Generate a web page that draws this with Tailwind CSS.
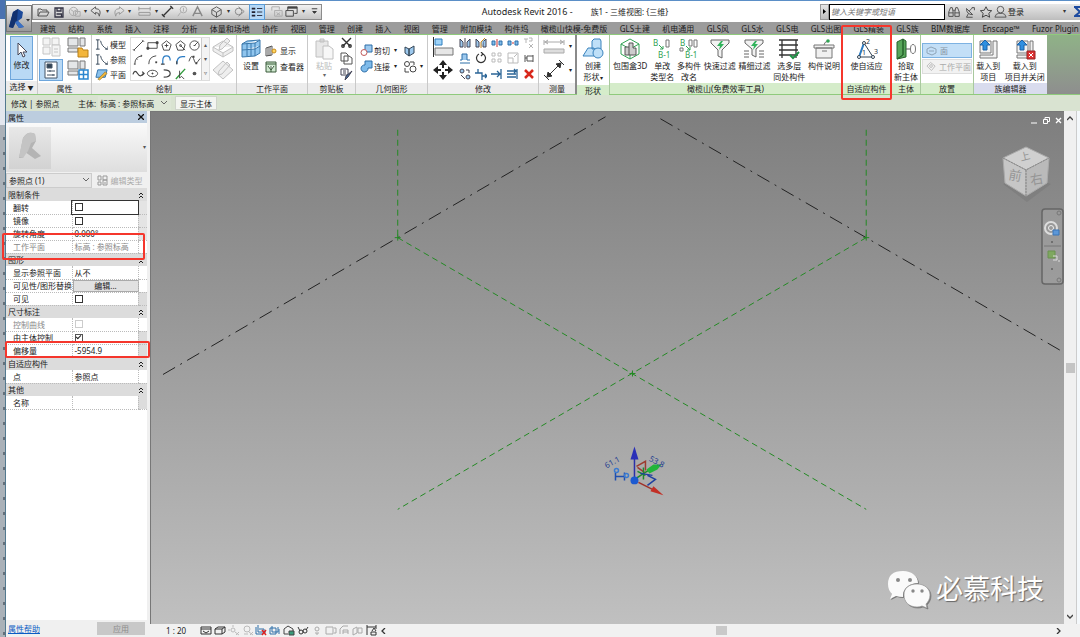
<!DOCTYPE html>
<html lang="zh-CN">
<head>
<meta charset="utf-8">
<title>Autodesk Revit 2016</title>
<script src="https://cdn.jsdelivr.net/npm/@tailwindcss/browser@4"></script>
</head>
<body class="relative flex h-screen overflow-hidden bg-white font-['Noto_Sans','Noto_Sans_CJK_SC',sans-serif] text-[8px] leading-[11px] text-[#222]">

<!-- edge of the window behind -->
<div class="flex w-[6px] shrink-0 flex-col border-r border-[#53798f]" aria-hidden="true">
  <div class="h-[19px] bg-[#4a72b0]"></div>
  <div class="h-[106px] bg-[#e3e7ee]"></div>
  <div class="flex-1 bg-[#aab1b8] bg-[repeating-linear-gradient(to_bottom,transparent_0_12px,#66707a_12px_15px)] bg-[length:2px_100%] bg-right bg-no-repeat"></div>
</div>

<div class="flex min-w-0 flex-1 flex-col border-t border-[#5b8fc7]">

<!-- title bar and tabs -->
<header class="flex h-[33px] shrink-0">
  <div class="flex w-[26px] shrink-0 flex-col bg-white pt-1">
    <button aria-label="应用程序菜单" class="flex h-[27px] items-center justify-center border border-[#777] bg-linear-to-b from-[#eee] to-[#999]">
      <svg class="h-[24px] w-[24px]" viewBox="0 0 24 24"><path d="M2 20 L6 5 L11 2 L16 5 L15 11 L11 14 L17 20 L12 21 L8 15 L6 21 Z" fill="#1c4a9a"/><path d="M6 5 L11 2 L10 13 L6 21 L2 20Z" fill="#12316e"/><path d="M8 15 L11 14 L17 20 L12 21Z" fill="#3a70c4"/><path d="M19 12h4l-2 2.500z" fill="#333"/></svg>
    </button>
    <div class="flex-1 bg-[#9c9c9c]"></div>
  </div>
  <div class="flex min-w-0 flex-1 flex-col">
    <div class="flex h-[21px] shrink-0 items-center">
      <div class="flex h-[16px] w-[290px] shrink-0 items-center border border-[#8c8c8c] bg-linear-to-b from-[#f2f2f2] to-[#c4c4c4] pl-0.5">
        <button aria-label="打开"><svg class="size-[16px]" viewBox="0 0 16 16" fill="none" stroke="#555"><path d="M3 12V5h3l1 1h5v2M3 12l2-4h9l-2 4z"/></svg></button>
        <button aria-label="保存"><svg class="size-[16px]" viewBox="0 0 16 16" fill="none" stroke="#334"><path d="M4 4h8v9H4zM6 4v3h4V4M5.500 10h5v3" stroke-width="1.300"/></svg></button>
        <button aria-label="同步"><svg class="size-[15px]" viewBox="0 0 16 16" fill="none" stroke="#aaa"><circle cx="7" cy="8" r="4.500"/><path d="M9 8h5v5H9zM4 6l3 2v4M7 8l4-2"/></svg></button>
        <span class="w-[7px] text-center text-[6px] text-[#333]">▾</span>
        <button aria-label="放弃"><svg class="size-[15px]" viewBox="0 0 16 16" fill="none" stroke="#555"><path d="M7 3 2 7l5 4V9q4 0 4 4 3-8-4-8z"/></svg></button>
        <span class="w-[7px] text-center text-[6px] text-[#333]">▾</span>
        <button aria-label="重做"><svg class="size-[15px]" viewBox="0 0 16 16" fill="none" stroke="#999"><path d="M9 3l5 4-5 4V9q-4 0-4 4-3-8 4-8z"/></svg></button>
        <span class="w-[7px] text-center text-[6px] text-[#333]">▾</span>
        <button aria-label="测量" class="ml-1"><svg class="size-[15px]" viewBox="0 0 16 16" fill="none" stroke="#999"><path d="M2 5h12M2 3v4M14 3v4M2 9h12v3H2z"/></svg></button>
        <span class="w-2 text-center text-[6px] text-[#333]">▾</span>
        <button aria-label="对齐尺寸标注"><svg class="size-[15px]" viewBox="0 0 16 16" fill="none" stroke="#333"><path d="M3 13 13 3M2 11l3 3M11 2l3 3" stroke-width="1.400"/></svg></button>
        <button aria-label="标记"><svg class="size-[15px]" viewBox="0 0 16 16" fill="none" stroke="#aaa"><circle cx="9" cy="6" r="3.500"/><path d="M6 9l-3 4M9 4v4"/></svg></button>
        <button aria-label="文字"><svg class="size-[15px]" viewBox="0 0 16 16" fill="none" stroke="#888" stroke-width="1.500"><path d="M3 13 8 3l5 10M5 10h6"/></svg></button>
        <button aria-label="默认三维视图" class="ml-1"><svg class="size-[15px]" viewBox="0 0 16 16" fill="none" stroke="#555"><path d="M3 6l5-3 5 3v5l-5 3-5-3zM3 6l5 3 5-3M8 9v5"/></svg></button>
        <span class="w-2 text-center text-[6px] text-[#333]">▾</span>
        <button aria-label="剖面"><svg class="size-[15px]" viewBox="0 0 16 16" fill="none" stroke="#888"><circle cx="7" cy="8" r="3.500"/><path d="M7 3l6 5-6 5"/></svg></button>
        <button aria-label="细线" class="ml-0.5 border border-[#5a9bd5] bg-[#b5d8f7]"><svg class="size-[14px]" viewBox="0 0 16 16" fill="none" stroke="#223"><path d="M2 4h4M2 8h4M2 12h4" stroke-width="2"/><path d="M8 4h6M8 8h6M8 12h6"/></svg></button>
        <button aria-label="关闭隐藏窗口" class="ml-1"><svg class="size-[15px]" viewBox="0 0 16 16" fill="none" stroke="#aaa"><path d="M3 7V3h8v3M6 7h8v6H6zM8 9l4 3M12 9l-4 3"/></svg></button>
        <button aria-label="切换窗口"><svg class="size-[15px]" viewBox="0 0 16 16" fill="none" stroke="#444"><path d="M4 3h10v7h-3M4 3v4M2 7h8v6H2z"/><path d="M4 4h10" stroke-width="2"/></svg></button>
        <span class="w-2 text-center text-[6px] text-[#333]">▾</span>
        <button aria-label="自定义" class="ml-0.5"><svg class="size-[11px]" viewBox="0 0 12 12" stroke="#333" fill="#333"><path d="M3 3h6M4 6h4l-2 2z"/></svg></button>
      </div>
      <h1 class="flex flex-1 justify-center gap-[18px] pl-2 text-[8px] leading-[16px] whitespace-nowrap"><span class="text-[9px]">Autodesk Revit 2016 -</span><span>族1 - 三维视图: {三维}</span></h1>
      <div class="flex h-[16px] w-[260px] shrink-0 items-center bg-linear-to-b from-[#e8e8e8] to-[#bdbdbd]">
        <button aria-label="展开搜索" class="flex h-full w-[9px] items-center justify-center border border-[#999]"><svg class="size-[5px]" viewBox="0 0 5 5"><path d="M1 0l3 2.500L1 5z"/></svg></button>
        <input aria-label="搜索" placeholder="键入关键字或短语" class="h-full w-[116px] border border-black bg-white px-px text-[8px] italic placeholder:text-[#777]">
        <button aria-label="搜索帮助" class="ml-0.5"><svg class="size-[14px]" viewBox="0 0 16 16" fill="none" stroke="#444"><path d="M4 3h2l1 5v5H2V8zM10 3h2l2 5v5H9V8zM7 6h2M2 9h5M9 9h5"/></svg></button>
        <button aria-label="通讯中心"><svg class="ml-0.5 size-[14px]" viewBox="0 0 16 16" fill="none" stroke="#444"><path d="M4 4q0 7 7 7zM7 7l4-4M10 3h3v3M6 10l-2 4h7"/></svg></button>
        <button aria-label="收藏夹"><svg class="ml-0.5 size-[14px]" viewBox="0 0 16 16" fill="none" stroke="#333"><path d="M8 2l2 4 4.500.500-3.300 3 1 4.500L8 11.700 3.800 14l1-4.500-3.300-3L6 6z"/></svg></button>
        <button class="flex items-center"><svg class="size-[15px]" viewBox="0 0 16 16" fill="none" stroke="#555"><circle cx="8" cy="6" r="3.500"/><path d="M2 14q1-4 4-4h4q3 0 4 4z"/></svg>登录</button>
        <span class="ml-auto pr-2 text-[6px] text-[#333]">▾</span>
        <svg class="h-[11px] w-[6px]" viewBox="0 0 6 11" stroke="#1d4ba0" stroke-width="2" fill="none"><path d="M0 1h6M1 1l5 5-5 4h5"/></svg>
      </div>
    </div>
    <nav class="flex h-[12px] shrink-0 items-center justify-between bg-[#9c9c9c] pr-px pl-2 whitespace-nowrap text-[#1c1c1c]">
      <a href="#">建筑</a><a href="#">结构</a><a href="#">系统</a><a href="#">插入</a><a href="#">注释</a><a href="#">分析</a><a href="#">体量和场地</a><a href="#">协作</a><a href="#">视图</a><a href="#">管理</a><a href="#">创建</a><a href="#">插入</a><a href="#">视图</a><a href="#">管理</a><a href="#">附加模块</a><a href="#">构件坞</a><a href="#">橄榄山快模-免费版</a><a href="#">GLS土建</a><a href="#">机电通用</a><a href="#">GLS风</a><a href="#">GLS水</a><a href="#">GLS电</a><a href="#">GLS出图</a><a href="#">GLS精装</a><a href="#">GLS族</a><a href="#">BIM数据库</a><a href="#">Enscape™</a><a href="#">Fuzor Plugin</a>
    </nav>
  </div>
</header>

<!-- ribbon -->
<div class="flex h-[61px] shrink-0 border-y border-[#8fca7c] bg-linear-to-b from-[#8fb287] to-[#8e8e8e] whitespace-nowrap">
  <section class="flex w-[32px] shrink-0 flex-col border-r border-[#c9c9c9] bg-white">
    <div class="flex flex-1 justify-center px-1 pt-px">
      <button class="flex w-full flex-col items-center border border-[#6ea6dc] bg-[#b9d9f5] pt-1"><svg class="size-[18px]" viewBox="0 0 18 18"><path d="M5 2v12l3-3 2 5 2-1-2-4h4z" fill="#fff" stroke="#445"/></svg>修改</button>
    </div>
    <h2 class="mt-px bg-[#ececec] text-center">选择 <span class="text-[6px]">▼</span></h2>
  </section>
  <section class="flex w-[54px] shrink-0 flex-col border-r border-[#c9c9c9] bg-white">
    <div class="grid flex-1 grid-cols-2 place-items-center">
      <button aria-label="类型属性"><svg class="size-[22px]" viewBox="0 0 22 22" fill="#f4f4f4" stroke="#c4c4c4"><path d="M3 2h7v7H3zM12 2h7v7h-7zM3 11h7v7H3z"/><path d="M12 9h8v11h-8zM14 13h4M14 16h4"/></svg></button>
      <button aria-label="族类别"><svg class="size-[22px]" viewBox="0 0 22 22" fill="#e4e6e8" stroke="#777"><path d="M1 2h10v8H1zM13 2h5v8h-5zM1 12h10v4H1z"/><path d="M11 12h4l1 2h5v7H11z" fill="#f3b63c" stroke="#b98018"/></svg></button>
      <button aria-label="属性" class="flex h-[22px] w-[24px] items-center justify-center border border-[#6ea6dc] bg-[#b9d9f5]"><svg class="size-[20px]" viewBox="0 0 20 20" fill="#fff" stroke="#456"><path d="M4 2h12v16H4z"/><path d="M6 4h5v4H6z" fill="#345"/><path d="M6 11h8M6 15h8M9 10v2M12 14v2"/></svg></button>
      <button aria-label="族类型"><svg class="size-[22px]" viewBox="0 0 22 22" fill="#e4e6e8" stroke="#777"><path d="M1 2h10v8H1zM13 2h5v8h-5zM1 12h10v4H1z"/><path d="M12 11h9v9h-9zM12 15.500h9M16.500 11v9" fill="#fff" stroke="#2a86cf" stroke-width="1.500"/></svg></button>
    </div>
    <h2 class="mt-px bg-[#ececec] text-center">属性</h2>
  </section>
  <section class="flex w-[145px] shrink-0 flex-col border-r border-[#c9c9c9] bg-white">
    <div class="flex flex-1 pt-[2px] pl-[3px]">
      <div class="flex w-[35px] shrink-0 flex-col justify-around">
        <button class="flex items-center gap-[2px]"><svg class="size-[13px]" viewBox="0 0 14 14" fill="none" stroke="#345"><path d="M3 2v10M1 2h4M1 12h4M6 3q1 6 7 9M11 12h3v-3"/></svg>模型</button>
        <button class="flex items-center gap-[2px]"><svg class="size-[13px]" viewBox="0 0 14 14" fill="none" stroke="#345"><path d="M3 2v10M1 2h4M1 12h4M6 3q1 6 7 9M11 12h3v-3"/></svg>参照</button>
        <button class="flex items-center gap-[2px]"><svg class="size-[13px]" viewBox="0 0 14 14"><path d="M3 2h10l-2 8H1z" fill="#8bc2ec" stroke="#2d6ea8"/><path d="M3 12 11 4l2 2-8 7z" fill="#f0b53a" stroke="#8b6a20" stroke-width=".6"/></svg>平面</button>
      </div>
      <div class="flex h-[44px] w-[80px] shrink-0 border border-[#ddd]">
        <div class="grid flex-1 grid-cols-5 place-items-center">
          <button aria-label="直线"><svg class="size-[13px]" viewBox="0 0 14 14" fill="none" stroke="#444"><path d="M2 12 12 2M1 11l2 2M11 1l2 2"/></svg></button>
          <button aria-label="矩形"><svg class="size-[13px]" viewBox="0 0 14 14" fill="none" stroke="#444"><path d="M2 4h10v6H2z"/><path d="M1 9h2v2H1zM11 3h2v2h-2z" fill="#444"/></svg></button>
          <button aria-label="内接多边形"><svg class="size-[13px]" viewBox="0 0 14 14" fill="none" stroke="#444"><path d="M7 2l5 4-2 6H4L2 6z"/><path d="M7 5v4M5 7h4"/></svg></button>
          <button aria-label="外接多边形"><svg class="size-[13px]" viewBox="0 0 14 14" fill="none" stroke="#444"><path d="M7 2l5 4-2 6H4L2 6zM7 7l5 5"/><circle cx="7" cy="7" r="1"/></svg></button>
          <button aria-label="圆形"><svg class="size-[13px]" viewBox="0 0 14 14" fill="none" stroke="#444"><circle cx="7" cy="7" r="5"/><path d="M7 7l4-4M6 7h2"/></svg></button>
          <button aria-label="起点终点半径弧"><svg class="size-[13px]" viewBox="0 0 14 14" fill="none" stroke="#444"><path d="M3 12Q3 4 11 3M2 12h2M10 2v2M5 6l1 1"/></svg></button>
          <button aria-label="圆心端点弧"><svg class="size-[13px]" viewBox="0 0 14 14" fill="none" stroke="#444"><path d="M3 12Q3 4 11 3"/><path d="M10 9h2v2h-2z" fill="#444" stroke="none"/></svg></button>
          <button aria-label="相切弧"><svg class="size-[13px]" viewBox="0 0 14 14" fill="none" stroke="#2b7cc4" stroke-width="1.300"><path d="M3 12V8q0-5 4-5t4 5"/><path d="M1 12h4" stroke="#444"/></svg></button>
          <button aria-label="圆角弧"><svg class="size-[13px]" viewBox="0 0 14 14" fill="none" stroke="#2b7cc4" stroke-width="1.300"><path d="M3 12Q3 4 9 4h3"/><path d="M3 12V9" stroke="#444"/></svg></button>
          <button aria-label="样条曲线"><svg class="size-[13px]" viewBox="0 0 14 14" fill="none" stroke="#444"><path d="M1 9q3-9 5-3t3 5 4-5"/><path d="M5 3h2v2H5zM8 10h2v2H8z" fill="#444" stroke="none"/></svg></button>
          <button aria-label="通过点的样条曲线"><svg class="size-[13px]" viewBox="0 0 14 14" fill="none" stroke="#444" stroke-width="1.300"><path d="M1 8q2-6 5-1t6 0M11 5l2 2-2 2"/></svg></button>
          <button aria-label="椭圆"><svg class="size-[13px]" viewBox="0 0 14 14" fill="none" stroke="#444"><ellipse cx="7" cy="7" rx="5.500" ry="3.500"/><path d="M7 6v2M6 7h2"/></svg></button>
          <button aria-label="半椭圆"><svg class="size-[13px]" viewBox="0 0 14 14" fill="none" stroke="#444" stroke-width="1.300"><path d="M4 3q7 0 7 4t-7 4"/></svg></button>
          <button aria-label="拾取线"><svg class="size-[13px]" viewBox="0 0 14 14" fill="none" stroke="#2f9a3a" stroke-width="1.500"><path d="M2 13 12 2"/><path d="M6 4v8l2-2 3 3" stroke="#444" stroke-width="1"/></svg></button>
          <button aria-label="点图元"><svg class="size-[13px]" viewBox="0 0 14 14"><circle cx="7" cy="7" r="2" fill="#555"/></svg></button>
        </div>
        <div class="flex w-[8px] flex-col items-center justify-around border-l border-[#ccc] bg-[#f3f3f3] text-[6px] text-[#555]"><span>▴</span><span>▾</span><span>▿</span></div>
      </div>
      <div class="flex flex-1 flex-col items-center">
        <button aria-label="在面上绘制"><svg class="size-[22px]" viewBox="0 0 22 22" fill="#eee" stroke="#c2c2c2"><path d="M1 10l10-6 10 6v4l-10 6-10-6zM1 10l10 6 10-6M11 16v4M8 8 15 1l3 3-8 8-3 1z"/></svg></button>
        <button aria-label="在工作平面上绘制"><svg class="size-[22px]" viewBox="0 0 22 22" fill="#eee" stroke="#c2c2c2"><path d="M1 11 11 2l10 9-10 9zM7 12l8-9 3 3-8 9-4 1z"/></svg></button>
      </div>
    </div>
    <h2 class="mt-px bg-[#ececec] text-center">绘制</h2>
  </section>
  <section class="flex w-[71px] shrink-0 flex-col border-r border-[#c9c9c9] bg-white">
    <div class="flex flex-1">
      <button class="flex w-[28px] flex-col items-center pt-[3px]"><svg class="size-[22px]" viewBox="0 0 22 22" fill="#8fc5ee" stroke="#3a78ab"><path d="M2 6l5-3 13-1v13l-5 3-13 1zM2 6l13-1 5-3M2 12l13-1 5-3M7 5v13M11 5v13M15 5v13"/></svg>设置</button>
      <div class="flex flex-col justify-center gap-[4px]">
        <button class="flex items-center gap-[3px]"><svg class="size-[12px]" viewBox="0 0 12 12" fill="#fff" stroke="#555"><path d="M1 3l6-2v9l-6 1zM3 2v9M5 2v9"/><circle cx="9" cy="6" r="2" fill="#ffd75e" stroke="#c98a1b"/></svg>显示</button>
        <button class="flex items-center gap-[3px]"><svg class="size-[12px]" viewBox="0 0 12 12" fill="#cfe8cf" stroke="#3a5a3a"><path d="M1 1h10v10H1zM1 3h10M3 5l3 4 3-4M6 5v6"/></svg>查看器</button>
      </div>
    </div>
    <h2 class="mt-px bg-[#ececec] text-center">工作平面</h2>
  </section>
  <section class="flex w-[48px] shrink-0 flex-col border-r border-[#c9c9c9] bg-white">
    <div class="flex flex-1">
      <button disabled class="flex w-[32px] flex-col items-center pt-[3px] text-[#bbb]"><svg class="size-[22px]" viewBox="0 0 22 22" fill="#e8e8e8" stroke="#c0c0c0"><path d="M3 3h12v16H3zM7 1h4v3H7z"/><path d="M10 8h6l4 3v10H10z" fill="#f7f7f7"/></svg>粘贴<span class="text-[6px] leading-[8px] text-[#666]">▾</span></button>
      <div class="flex flex-col justify-around">
        <button aria-label="剪切"><svg class="size-[13px]" viewBox="0 0 13 13" stroke="#333" fill="none" stroke-width="1.400"><path d="M2 2l8 8M11 2l-8 8"/><circle cx="3" cy="10" r="1.200"/><circle cx="10" cy="10" r="1.200"/></svg></button>
        <button aria-label="复制"><svg class="size-[13px]" viewBox="0 0 13 13" stroke="#555" fill="#fff"><path d="M1 1h5l2 2v6H1zM4 4h5l3 2v6H4z"/></svg></button>
        <button aria-label="匹配类型"><svg class="size-[13px]" viewBox="0 0 13 13" stroke="#445" fill="#fff"><path d="M1 1h7v6H1zM3 3h3M3 5h3"/><path d="M12 3 8 9l-3 3 1-4z" fill="#456a9a"/></svg></button>
      </div>
    </div>
    <h2 class="mt-px bg-[#ececec] text-center">剪贴板</h2>
  </section>
  <section class="flex w-[72px] shrink-0 flex-col border-r border-[#c9c9c9] bg-white">
    <div class="flex flex-1 justify-between pr-px pl-1">
      <div class="flex flex-col justify-center gap-[3px]">
        <button class="flex items-center gap-px"><svg class="size-[13px]" viewBox="0 0 13 13"><path d="M5 1h7v7H5z" fill="#9dc9ee" stroke="#2d6ea8"/><circle cx="4" cy="8.500" r="3" fill="#fff" stroke="#c05a5a"/></svg>剪切<span class="w-[6px] text-right text-[6px]">▾</span></button>
        <button class="flex items-center gap-px"><svg class="size-[13px]" viewBox="0 0 13 13"><path d="M5 1h7v7H8a3.500 3.500 0 1 1-3-3z" fill="#7fbbea" stroke="#2d6ea8"/></svg>连接<span class="w-[6px] text-right text-[6px]">▾</span></button>
      </div>
      <div class="flex w-[23px] flex-col justify-center gap-[3px]">
        <button aria-label="拆分面"><svg class="size-[13px]" viewBox="0 0 13 13" fill="#9dc9ee" stroke="#345"><path d="M2 3l4 2v7l-4-3zM6 5l5-3v7l-5 3z"/></svg></button>
        <button aria-label="填色" class="flex items-center"><svg class="size-[14px]" viewBox="0 0 14 14" fill="none" stroke="#444"><circle cx="4" cy="4" r="2.500"/><circle cx="10" cy="9" r="3"/><path d="M2 8v4h4M7 2h4v3"/></svg><span class="w-[6px] text-right text-[6px]">▾</span></button>
      </div>
    </div>
    <h2 class="mt-px bg-[#ececec] text-center">几何图形</h2>
  </section>
  <section class="flex w-[111px] shrink-0 flex-col border-r border-[#c9c9c9] bg-white">
    <div class="flex flex-1 gap-[3px] pr-px pl-[4px]">
      <div class="flex flex-col justify-around">
        <button aria-label="对齐"><svg class="size-[22px]" viewBox="0 0 22 22"><path d="M1.500 1v20" stroke="#333"/><path d="M3 3h7v6H3z" fill="#9fd3f8" stroke="#2d7fc0"/><path d="M3 12h18v7H3z" fill="#e6e6e6" stroke="#777"/></svg></button>
        <button aria-label="移动"><svg class="size-[22px]" viewBox="0 0 22 22" fill="#222"><path d="M11 1l4 5h-3v3h-2V6H7zM11 21l-4-5h3v-3h2v3h3zM1 11l5-4v3h3v2H6v3zM21 11l-5 4v-3h-3v-2h3V7z"/></svg></button>
      </div>
      <div class="grid flex-1 grid-cols-5 place-items-center">
        <button aria-label="镜像-拾取轴"><svg class="size-[12px]" viewBox="0 0 12 12" fill="#9dc9ee" stroke="#445"><path d="M1 2l3 3v5H1zM11 2 8 5v5h3zM6 1v10"/></svg></button>
        <button aria-label="镜像-绘制轴"><svg class="size-[12px]" viewBox="0 0 12 12" fill="#9dc9ee" stroke="#445"><path d="M1 2l3 3v5H1zM11 2 8 5v5h3z"/><path d="M6 11V5l4-4" stroke="#d08a1c"/></svg></button>
        <button aria-label="拆分图元"><svg class="size-[12px]" viewBox="0 0 12 12" fill="#7fbbea" stroke="#2d6ea8"><path d="M1 4h3v4H1zM8 4h3v4H8z"/><path d="M6 2v8" stroke="#c33"/></svg></button>
        <button aria-label="用间隙拆分"><svg class="size-[12px]" viewBox="0 0 12 12" fill="#7fbbea" stroke="#2d6ea8"><path d="M1 4h3v4H1zM8 4h3v4H8z"/><path d="M5 6h2" stroke="#c33"/></svg></button>
        <button aria-label="解锁"><svg class="size-[12px]" viewBox="0 0 12 12" fill="none" stroke="#b5b5b5"><path d="M1 2h4M3 2v4M6 1h3v3H6M6 7l4 4M10 7l-4 4"/></svg></button>
        <button aria-label="偏移"><svg class="size-[12px]" viewBox="0 0 12 12" fill="#9dc9ee" stroke="#2d6ea8"><path d="M1 8h2V2h5v6h3M1 11h10"/></svg></button>
        <button aria-label="旋转"><svg class="size-[12px]" viewBox="0 0 12 12" fill="none" stroke="#333" stroke-width="1.200"><path d="M8 2a4.500 4.500 0 1 1-4 0M6 0l2 2-2 2"/></svg></button>
        <button aria-label="阵列"><svg class="size-[12px]" viewBox="0 0 12 12" fill="none" stroke="#bbb"><path d="M1 1h3v3H1zM7 1h3v3H7zM1 7h3v3H1zM7 7h3v3H7z"/></svg></button>
        <button aria-label="缩放"><svg class="size-[12px]" viewBox="0 0 12 12" fill="none" stroke="#bbb"><path d="M1 1h10v10H1zM1 6h5v5M7 5l3-3"/></svg></button>
        <button aria-label="锁定"><svg class="size-[12px]" viewBox="0 0 12 12" fill="none" stroke="#555"><path d="M4 4h6v5H4zM2 3v7M4 6H2M10 4V3M10 9v1"/></svg></button>
        <button aria-label="复制图元"><svg class="size-[12px]" viewBox="0 0 12 12" fill="#9dc9ee" stroke="#445"><circle cx="3" cy="3" r="2"/><circle cx="9" cy="9" r="2"/><path d="M7 2h3v3M2 7l4 4" fill="none"/></svg></button>
        <button aria-label="修剪延伸为角"><svg class="size-[12px]" viewBox="0 0 12 12" fill="none" stroke="#2a6496" stroke-width="1.300"><path d="M0 5h7v7M3 1v4M7 8h5M10 6l2 2-2 2"/></svg></button>
        <button aria-label="修剪延伸单个"><svg class="size-[12px]" viewBox="0 0 12 12" fill="none" stroke="#2a6496" stroke-width="1.300"><path d="M10 1v10M0 6h9M6 3l3 3-3 3"/></svg></button>
        <button aria-label="修剪延伸多个"><svg class="size-[12px]" viewBox="0 0 12 12" fill="none" stroke="#2a6496" stroke-width="1.300"><path d="M10 1v10M0 3h9M0 6h9M0 9h9M7 1l2 2-2 2"/></svg></button>
        <button aria-label="删除"><svg class="size-[12px]" viewBox="0 0 12 12" stroke="#d8281c" stroke-width="2.500"><path d="M2 2l8 8M10 2l-8 8"/></svg></button>
      </div>
    </div>
    <h2 class="mt-px bg-[#ececec] text-center">修改</h2>
  </section>
  <section class="flex w-[38px] shrink-0 flex-col border-r-2 border-[#8a8a8a] bg-white">
    <div class="flex flex-1 flex-col justify-around pl-1">
      <button aria-label="测量距离" class="flex items-center gap-1"><svg class="size-[22px]" viewBox="0 0 22 22" fill="#ddd" stroke="#aaa"><path d="M1 6h20M1 4v5M21 4v5M5 4 2 6l3 2M17 4l3 2-3 2M1 13h20v4H1z"/></svg><span class="text-[6px]">▾</span></button>
      <button aria-label="尺寸标注" class="flex items-center gap-1"><svg class="size-[22px]" viewBox="0 0 22 22" fill="none" stroke="#333"><path d="M3 19 19 3M1 16l5 5M16 1l5 5"/><path d="M4 18l1-5 4 4zM18 4l-1 5-4-4z" fill="#333"/></svg><span class="text-[6px]">▾</span></button>
    </div>
    <h2 class="mt-px bg-[#ececec] text-center">测量</h2>
  </section>
  <section class="flex w-[33px] shrink-0 flex-col border-r border-[#a9c99f] bg-white">
    <button class="flex flex-1 flex-col items-center pt-[3px]"><svg class="size-[22px]" viewBox="0 0 22 22" fill="#bfe0f8" stroke="#3a83bd"><path d="M10 3l2-2h6l1 2v8h-9zM1 18l5-8h6l2 8z"/><circle cx="16" cy="15" r="5"/></svg><span>创建<br>形状<span class="text-[6px]">▾</span></span></button>
    <h2 class="mt-px bg-[#d5ecca] text-center">形状</h2>
  </section>
  <section class="flex w-[232px] shrink-0 flex-col border-r border-[#a9c99f] bg-white">
    <div class="flex flex-1 justify-between pr-px pl-[3px] text-center">
      <button class="flex flex-col items-center pt-[3px]"><svg class="size-[22px]" viewBox="0 0 22 22" fill="none" stroke="#31a354"><path d="M2 6l9-5 9 5v10l-9 5-9-5zM2 6l9 5 9-5M11 11v10"/><path d="M6 9h4V5h4v5h3v7H6zM10 9v8" fill="#ccc" stroke="#555"/></svg>包围盒3D</button>
      <button class="flex flex-col items-center pt-[3px]"><svg class="h-[22px] w-[20px]" viewBox="0 0 20 22" fill="none" stroke="#777"><path d="M14 2h3v7h-3z"/><path d="M7 7l4 4M11 8v3H8" stroke="#31a354"/><text x="1" y="8" font-size="8" fill="#31a354" stroke="none">B</text><text x="6" y="20" font-size="8" fill="#31a354" stroke="none">B-1</text></svg>单改<br>类型名</button>
      <button class="flex flex-col items-center pt-[3px]"><svg class="h-[22px] w-[20px]" viewBox="0 0 20 22" fill="none" stroke="#777"><path d="M10 2h3v6h-3zM15 2h3v7h-3zM1 10h3v3H1z"/><path d="M7 8l4 4M11 9v3H8" stroke="#31a354"/><text x="1" y="8" font-size="8" fill="#31a354" stroke="none">B</text><text x="6" y="20" font-size="8" fill="#31a354" stroke="none">B-1</text></svg>多构件<br>改名</button>
      <button class="flex flex-col items-center pt-[3px]"><svg class="size-[22px]" viewBox="0 0 22 22" fill="#f2f2f2" stroke="#666"><path d="M2 2h18v3l-7 7v8l-4-2v-6L2 5z"/><path d="M12 3 8 8h3l-1 4 5-6h-3l2-3z" fill="#31b35c" stroke="none"/></svg>快速过滤</button>
      <button class="flex flex-col items-center pt-[3px]"><svg class="size-[22px]" viewBox="0 0 22 22" fill="#f2f2f2" stroke="#666"><path d="M2 2h18v3l-7 6v8l-4-2v-6L2 5zM1 13h5M1 16h5M1 19h5M16 13h5M16 16h5M16 19h5"/><path d="M12 3 8 8h3l-1 4 5-6h-3l2-3z" fill="#31b35c" stroke="none"/></svg>精细过滤</button>
      <button class="flex flex-col items-center pt-[3px]"><svg class="size-[22px]" viewBox="0 0 22 22" fill="none" stroke="#333"><path d="M1 2h19M1 7h19M1 12h19M1 17h19M4 2v18M18 2v18" stroke-width="1.300"/><path d="M12 17l3 3 6-6" stroke="#1f8f45" stroke-width="2"/></svg>选多层<br>同处构件</button>
      <button class="flex flex-col items-center pt-[3px]"><svg class="size-[22px]" viewBox="0 0 22 22" fill="#f0f0f0" stroke="#777"><path d="M1 7h20v3H1zM3 10h16v10H3zM9 13h5"/><path d="M11 7q0-3 4-4" fill="none"/><circle cx="15" cy="3" r="1.800" fill="#31a354" stroke="none"/></svg>构件说明</button>
    </div>
    <h2 class="mt-px bg-[#d5ecca] text-center">橄榄山(免费效率工具)</h2>
  </section>
  <section class="flex w-[50px] shrink-0 flex-col border-r border-[#a9c99f] bg-white">
    <button class="flex flex-1 flex-col items-center pt-[3px]"><svg class="size-[22px]" viewBox="0 0 22 22" fill="none" stroke="#345"><path d="M3 19 8 5l9 14z"/><path d="M3 19 8 5" stroke="#2b7cc4" stroke-width="2"/><circle cx="3" cy="19" r="1.500" fill="#fff"/><circle cx="8" cy="5" r="1.500" fill="#fff"/><circle cx="17" cy="19" r="1.500" fill="#fff"/><g fill="#234" stroke="none" font-size="7"><text x="10" y="6">2</text><text x="6" y="17">1</text><text x="18" y="16">3</text></g></svg>使自适应</button>
    <h2 class="mt-px bg-[#d5ecca] text-center">自适应构件</h2>
  </section>
  <section class="flex w-[29px] shrink-0 flex-col border-r border-[#a9c99f] bg-white">
    <button class="flex flex-1 flex-col items-center pt-[3px]"><svg class="size-[22px]" viewBox="0 0 22 22" fill="#57a55a" stroke="#27632c"><path d="M2 4l6-3v16l-6 4zM8 1l3 2v16l-9 2 6-4z"/><path d="M11 11h5" stroke="#555"/><ellipse cx="18" cy="11" rx="2.500" ry="4.500" fill="#fff" stroke="#777"/></svg>拾取<br>新主体</button>
    <h2 class="mt-px bg-[#d5ecca] text-center">主体</h2>
  </section>
  <section class="flex w-[53px] shrink-0 flex-col border-r border-[#a9c99f] bg-white">
    <div class="flex flex-1 flex-col justify-center gap-px px-px text-[#aaa]">
      <button class="flex h-[15px] items-center gap-[3px] border border-[#7db2e2] bg-[#c3dff7] pl-[3px] text-[#8795a3]"><svg class="size-[11px]" viewBox="0 0 11 11" fill="none" stroke="#8fa5b8"><path d="M1 4l4-2 5 2v4l-4 2-5-2zM3 6h5"/></svg>面</button>
      <button class="flex h-[15px] items-center gap-[3px] border border-[#ddd] bg-[#f2f2f2] pl-[3px]"><svg class="size-[11px]" viewBox="0 0 11 11" fill="none" stroke="#bbb"><path d="M1 5l4-4 5 4-4 5z"/><circle cx="5.500" cy="5" r="1.500"/></svg>工作平面</button>
    </div>
    <h2 class="mt-px bg-[#d5ecca] text-center">放置</h2>
  </section>
  <section class="flex w-[73px] shrink-0 flex-col bg-white">
    <div class="flex flex-1 justify-around text-center">
      <button class="flex flex-col items-center pt-[3px]"><svg class="size-[22px]" viewBox="0 0 22 22" fill="#f2f2f2" stroke="#777"><path d="M3 3h11v12H3zM16 3h4v17H3v-3h13z"/><path d="M8 2l5 5h-3v5H6V7H3z" fill="#2f8fe0" stroke="#1d62a8"/></svg>载入到<br>项目</button>
      <button class="flex flex-col items-center pt-[3px]"><svg class="size-[22px]" viewBox="0 0 22 22" fill="#f2f2f2" stroke="#777"><path d="M3 3h11v12H3zM16 3h3v17H3v-3h13z"/><path d="M8 2l5 5h-3v5H6V7H3z" fill="#2f8fe0" stroke="#1d62a8"/><path d="M13 13h8v8h-8z" fill="#d33" stroke="#922"/><path d="M15 15l4 4M19 15l-4 4" stroke="#fff"/></svg>载入到<br>项目并关闭</button>
    </div>
    <h2 class="mt-px bg-[#d9dcee] text-center">族编辑器</h2>
  </section>
</div>

<!-- options bar -->
<div class="flex h-[16px] shrink-0 items-center bg-[#d9e3d1] pl-[5px] whitespace-nowrap">
  <span class="w-[67px]">修改 | 参照点</span>
  <label for="host" class="w-[20px]">主体:</label>
  <select id="host" class="h-[14px] w-[73px] appearance-none bg-[#dde6d6] bg-[url('data:image/svg+xml,%3Csvg%20xmlns=%22http://www.w3.org/2000/svg%22%20width=%226%22%20height=%224%22%3E%3Cpath%20d=%22M0%200l3%203%203-3%22%20fill=%22none%22%20stroke=%22%23666%22/%3E%3C/svg%3E')] bg-[position:right_4px_center] bg-no-repeat px-[2px]"><option>标高 : 参照标高</option></select>
  <button class="ml-1 h-[14px] w-[42px] border border-[#cfd4cb] bg-[#f3f5f1]">显示主体</button>
</div>

<!-- work area -->
<div class="flex min-h-0 flex-1">
  <aside class="flex w-[144px] shrink-0 flex-col border-r-[3px] border-[#f0f0f0] bg-white">
    <div class="flex h-[12px] shrink-0 items-center justify-between bg-[#bccddf] pr-[3px] pl-[2px] text-[#111]"><h2>属性</h2><button aria-label="关闭"><svg class="size-[6px]" viewBox="0 0 6 6" stroke="#111" stroke-width="1.300"><path d="M0 0l6 6M6 0 0 6"/></svg></button></div>
    <div class="flex h-[49px] shrink-0 items-center justify-between bg-linear-to-b from-[#fafafa] to-[#dedede] pr-px pl-[3px]">
      <svg class="h-[42px] w-[42px] bg-linear-to-b from-[#e8e8e8] to-[#d2d2d2]" viewBox="0 0 42 42"><path d="M10 31 14 11q5-8 12-4l1 7-4 7 9 8-6 3-10-7-2 6z" fill="#b4b4b4"/><path d="M14 11q5-8 12-4l1 7-5 2-3 8-5 7-4-1z" fill="#c4c4c4"/></svg>
      <span class="text-[6px] text-[#555]">▾</span>
    </div>
    <div class="flex h-[16px] shrink-0 items-center bg-[#f0f0f0]">
      <select aria-label="类型" class="h-[15px] w-[86px] appearance-none border border-[#ccc] bg-[#e6e6e6] bg-[url('data:image/svg+xml,%3Csvg%20xmlns=%22http://www.w3.org/2000/svg%22%20width=%226%22%20height=%224%22%3E%3Cpath%20d=%22M0%200l3%203%203-3%22%20fill=%22none%22%20stroke=%22%23666%22/%3E%3C/svg%3E')] bg-[position:right_2px_center] bg-no-repeat px-[2px]"><option>参照点 (1)</option></select>
      <button disabled class="flex flex-1 items-center justify-center gap-[3px] text-[#aaa]"><svg class="size-[11px]" viewBox="0 0 11 11" fill="none" stroke="#999"><path d="M1 1h3v4H1zM6 1h4v4H6zM1 7h3v3H1zM6 5h4v5H6zM7 8h2"/></svg>编辑类型</button>
    </div>
    <table class="w-full table-fixed border-collapse text-left [&_td]:h-[13px] [&_td]:border-b [&_td]:border-dotted [&_td]:border-[#bbb] [&_td]:p-0 [&_td]:pl-[2px] [&_th]:h-[13px] [&_th]:p-0 [&_th]:font-normal [&_th_svg]:size-[6px]">
      <colgroup><col class="w-[66px]"><col><col class="w-[9px]"></colgroup>
      <tbody class="[&_td:first-child]:border-r [&_td:first-child]:pl-[7px] [&_td:first-child]:whitespace-nowrap [&_td:last-child]:border-l">
        <tr class="bg-[#dcdcdc]"><th colspan="2"><span class="pl-[2px]">限制条件</span></th><th><svg viewBox="0 0 6 6" fill="none" stroke="#222"><path d="M1 3l2-2 2 2M1 6l2-2 2 2"/></svg></th></tr>
        <tr><td>翻转</td><td class="outline outline-[#333]"><input type="checkbox" aria-label="翻转" class="block size-[8px] appearance-none border border-[#333]"></td><td class="bg-[#e4e4e4]"></td></tr>
        <tr><td>镜像</td><td><input type="checkbox" aria-label="镜像" class="block size-[8px] appearance-none border border-[#333]"></td><td class="bg-[#e4e4e4]"></td></tr>
        <tr><td>旋转角度</td><td>0.000°</td><td class="bg-[#e4e4e4]"></td></tr>
        <tr class="text-[#888]"><td>工作平面</td><td>标高 : 参照标高</td><td></td></tr>
        <tr class="bg-[#dcdcdc]"><th colspan="2"><span class="pl-[2px]">图形</span></th><th><svg viewBox="0 0 6 6" fill="none" stroke="#222"><path d="M1 3l2-2 2 2M1 6l2-2 2 2"/></svg></th></tr>
        <tr><td>显示参照平面</td><td>从不</td><td></td></tr>
        <tr><td>可见性/图形替换</td><td><button class="-ml-[2px] block h-[12px] w-[66px] border border-[#aaa] bg-[#e1e1e1] leading-[10px]">编辑...</button></td><td></td></tr>
        <tr><td>可见</td><td><input type="checkbox" aria-label="可见" class="block size-[8px] appearance-none border border-[#333]"></td><td class="bg-[#dcdcdc]"></td></tr>
        <tr class="bg-[#dcdcdc]"><th colspan="2"><span class="pl-[2px]">尺寸标注</span></th><th><svg viewBox="0 0 6 6" fill="none" stroke="#222"><path d="M1 3l2-2 2 2M1 6l2-2 2 2"/></svg></th></tr>
        <tr class="text-[#888]"><td>控制曲线</td><td><input type="checkbox" disabled aria-label="控制曲线" class="block size-[8px] appearance-none border border-[#ccc]"></td><td></td></tr>
        <tr><td>由主体控制</td><td><input type="checkbox" checked aria-label="由主体控制" class="block size-[8px] appearance-none border border-[#555] before:block before:h-[3px] before:w-[5px] before:-rotate-45 before:border-b before:border-l before:border-[#222]"></td><td class="bg-[#dcdcdc]"></td></tr>
        <tr><td>偏移量</td><td>-5954.9</td><td class="bg-[#dcdcdc]"></td></tr>
        <tr class="bg-[#dcdcdc]"><th colspan="2"><span class="pl-[2px]">自适应构件</span></th><th><svg viewBox="0 0 6 6" fill="none" stroke="#222"><path d="M1 3l2-2 2 2M1 6l2-2 2 2"/></svg></th></tr>
        <tr><td>点</td><td>参照点</td><td></td></tr>
        <tr class="bg-[#dcdcdc]"><th colspan="2"><span class="pl-[2px]">其他</span></th><th><svg viewBox="0 0 6 6" fill="none" stroke="#222"><path d="M1 3l2-2 2 2M1 6l2-2 2 2"/></svg></th></tr>
        <tr><td>名称</td><td></td><td class="bg-[#dcdcdc]"></td></tr>
      </tbody>
    </table>
    <div class="mt-auto flex h-[17px] shrink-0 items-center justify-between bg-[#f0f0f0] pr-[2px] pl-[2px]"><a href="#" class="text-[#0a5cc4] underline">属性帮助</a><button disabled class="h-[13px] w-[48px] bg-[#c8c8c8] text-[#8c8c8c]">应用</button></div>
  </aside>

  <div class="flex min-w-0 flex-1 flex-col">
    <div class="flex min-h-0 flex-1">
      <!-- 3D view -->
      <main class="relative min-w-0 flex-1 overflow-hidden border-t border-l border-[#777] bg-linear-to-b from-[#7e7e7e] to-[#c0c0c0]">
        <svg class="h-full w-full" viewBox="0 0 914 513" preserveAspectRatio="xMidYMid slice" fill="none">
          <g stroke="#238a23" stroke-dasharray="6 4">
            <path d="M247 18V126M716 18V126M247 126 716 398M716 126 247 398"/>
          </g>
          <g stroke="#222" stroke-dasharray="14 6 2 6">
            <path d="M12 263 247 126 455 5M510 7 716 126 914 241"/>
          </g>
          <g stroke="#238a23"><path d="M244 126h6M247 123v6M713 126h6M716 123v6M479 262h6M482 259v6"/></g>
          <!-- reference point gizmo -->
          <g stroke-width="1.500">
            <path d="M484 368V346" stroke="#2a2fa8"/><path d="M480 348l4-13 4 13z" fill="#2a2fb8"/>
            <path d="M484 368l14-9" stroke="#1d8a2c"/><path d="M496 358l7-5 8 0-4 5-8 4z" fill="#22b53a"/>
            <path d="M488 371l16 8" stroke="#a03028"/><path d="M503 375l10 9-13-4z" fill="#c22f26"/>
            <path d="M486 355l9-5v9M487 356l7 5" stroke="#9c3b30"/><path d="M493 356v12M487 360l8 4" stroke="#1d8a2c"/>
            <path d="M490 362l12 2M497 374l8-6-8-4" stroke="#1f3fa0"/>
            <path d="M465 361v8M465 365h9M474 361v8" stroke="#1f4fb0"/><circle cx="466" cy="359" r="2" stroke="#3a7ad0"/><circle cx="476" cy="364" r="2" stroke="#3a7ad0"/>
            <circle cx="484" cy="369" r="4" fill="#1d5ad0"/>
          </g>
          <g fill="#1f3f90" font-size="8"><text transform="translate(456 357) rotate(-28)">61.1</text><text transform="translate(498 349) rotate(28)">53.8</text></g>
        </svg>
        <div class="absolute top-[5px] right-[2px] flex items-center gap-[5px] text-white">
          <button aria-label="最小化"><svg class="size-[7px]" viewBox="0 0 7 7" stroke="#fff"><path d="M0 6h6"/></svg></button>
          <button aria-label="还原"><svg class="size-[7px]" viewBox="0 0 7 7" stroke="#fff" fill="none"><path d="M2 2V.5h4.500v4H5M.5 2.500h4v4h-4z"/></svg></button>
          <button aria-label="关闭视图"><svg class="size-[7px]" viewBox="0 0 7 7" stroke="#fff" stroke-width="1.300"><path d="M1 1l5 5M6 1 1 6"/></svg></button>
        </div>
        <!-- view cube -->
        <svg class="absolute top-[32px] right-[10px] h-[60px] w-[56px]" viewBox="0 0 56 60">
          <path d="M5 40l24 18 24-18-24-8z" fill="#707070" opacity=".35"/>
          <path d="M5 14 28 3l23 11-23 12z" fill="#d0d0d0" stroke="#aaa"/><path d="M5 14l23 12v26L7 39z" fill="#c6c6c6" stroke="#aaa"/><path d="M51 14 28 26v26l21-13z" fill="#bababa" stroke="#aaa"/><path d="M5 14l23 12 23-12M28 26v26" fill="none" stroke="#888" stroke-dasharray="2 1"/>
          <g fill="#959595" font-size="13"><text transform="translate(23 17) rotate(-14)" font-size="10">上</text><text transform="translate(10 35) rotate(10)">前</text><text transform="translate(33 41) rotate(-10)">右</text></g>
        </svg>
        <!-- navigation bar -->
        <svg class="absolute top-[96px] right-0 h-[77px] w-[23px]" viewBox="0 0 23 77" fill="none" stroke="#777">
          <rect x="1" y="1" width="21" height="75" rx="3" fill="#a0a0a0" fill-opacity=".7" stroke="#666" stroke-width="1.500"/>
          <circle cx="18" cy="5" r="2"/><circle cx="18" cy="72" r="2"/>
          <circle cx="10" cy="20" r="6" stroke="#ddd" stroke-width="2"/><circle cx="10" cy="20" r="2.500" stroke="#eee"/><path d="M12 22h6v5h-6z" fill="#5c97d8" stroke="#3b74b5"/>
          <path d="M10 34h2M10 61h2" stroke="#444"/><path d="M3 38h17"/>
          <path d="M7 43h7v7H7z" fill="#7fa860" stroke="#6b9150"/><path d="M12 48h4v4h-4M17 53h2" stroke="#ddd"/>
        </svg>
        <div class="absolute right-[20px] bottom-[15px] flex items-center gap-1 text-[27px] leading-[40px] text-white [text-shadow:1px_1px_1px_#666]">
          <svg class="h-[40px] w-[46px] drop-shadow-[1px_1px_0_#777]" viewBox="0 0 46 40"><path d="M17 2c9 0 15 5 15 12-8 0-15 5-15 12v2q-4 0-7-1l-6 3 2-5Q2 21 2 15 2 2 17 2z" fill="#fafafa"/><path d="M31 15c8 0 13 5 13 11 0 4-2 7-4 9l1 4-5-2q-2 1-5 1c-8 0-13-5-13-12s5-11 13-11z" fill="#fafafa" stroke="#999" stroke-width=".7"/><g fill="#888"><circle cx="12" cy="11" r="2"/><circle cx="24" cy="11" r="2"/><circle cx="27" cy="22" r="1.700"/><circle cx="36" cy="22" r="1.700"/></g></svg>必慕科技
        </div>
      </main>
      <div class="flex w-[12px] shrink-0 flex-col items-center justify-between bg-[#f0f0f0] py-1" aria-hidden="true">
        <svg class="size-[6px]" viewBox="0 0 6 6" fill="none" stroke="#444" stroke-width="1.300"><path d="M0 5l3-3 3 3"/></svg>
        <div class="h-[10px] w-[9px] bg-[#c4c4c4]"></div>
        <svg class="size-[6px]" viewBox="0 0 6 6" fill="none" stroke="#444" stroke-width="1.300"><path d="M0 1l3 3 3-3"/></svg>
      </div>
      <div class="w-1 shrink-0 border-l border-[#ccc] bg-[#f4f8fb]"></div>
    </div>
    <!-- view control bar -->
    <div class="flex h-[13px] shrink-0 items-center bg-[#f1f1f1] pl-4">
      <span class="w-[34px] whitespace-pre">1 : 20</span>
      <div class="flex w-[186px] shrink-0 items-center justify-between">
        <button aria-label="详细程度"><svg class="h-[11px] w-[12px]" viewBox="0 0 12 11" fill="none" stroke="#333"><path d="M1 2h10v7H1zM1 4h10M3 6l3 2 3-2"/></svg></button>
        <button aria-label="视觉样式"><svg class="h-[11px] w-[12px]" viewBox="0 0 12 11" fill="none" stroke="#333"><path d="M1 4h7v5H1zM1 4l3-2h7v5L8 9M8 4l3-2"/></svg></button>
        <button aria-label="日光路径"><svg class="h-[11px] w-[12px]" viewBox="0 0 12 11" fill="none" stroke="#bbb"><circle cx="5" cy="5" r="2"/><path d="M5 0v2M0 5h2M7 7l4 3M11 7l-3 3"/></svg></button>
        <button aria-label="阴影"><svg class="h-[11px] w-[12px]" viewBox="0 0 12 11" fill="none" stroke="#bbb"><circle cx="5" cy="4" r="3"/><path d="M7 7l4 3M11 7l-3 3M2 9h4"/></svg></button>
        <button aria-label="裁剪视图"><svg class="h-[11px] w-[12px]" viewBox="0 0 12 11" fill="none" stroke="#2d6ea8"><path d="M1 2v7h7M3 0v7h8M4 4h5v4"/><path d="M7 5l4 5M11 5l-4 5" stroke="#d22" stroke-width="1.500"/></svg></button>
        <button aria-label="显示裁剪区域"><svg class="h-[11px] w-[12px]" viewBox="0 0 12 11" fill="none" stroke="#2d6ea8"><path d="M1 3h6v6H1zM3 1v6h6V2M10 4v5"/></svg></button>
        <button aria-label="锁定三维视图"><svg class="h-[11px] w-[12px]" viewBox="0 0 12 11" fill="none" stroke="#444"><path d="M1 9V4l4-3 5 3v2M1 9h4"/><path d="M6 6h5v4H6z" fill="#3a9a7a"/></svg></button>
        <button aria-label="临时隐藏隔离"><svg class="h-[11px] w-[12px]" viewBox="0 0 12 11" fill="none" stroke="#333"><path d="M1 2l2 4M11 2 9 5"/><circle cx="4" cy="7" r="2"/><circle cx="8" cy="6" r="2"/></svg></button>
        <button aria-label="显示隐藏的图元"><svg class="h-[11px] w-[12px]" viewBox="0 0 12 11" fill="none" stroke="#aaa"><circle cx="6" cy="4" r="2"/><path d="M5 7v2h2V7"/></svg></button>
        <button aria-label="临时视图属性"><svg class="h-[11px] w-[12px]" viewBox="0 0 12 11" fill="none" stroke="#aaa"><path d="M1 2h7v7H1zM9 3h2v5H9"/></svg></button>
        <button aria-label="分析模型"><svg class="h-[11px] w-[12px]" viewBox="0 0 12 11" fill="none" stroke="#aaa"><path d="M2 9V4l3-3h5M5 9V5h5v4M5 7h5"/></svg></button>
        <button aria-label="位移集"><svg class="h-[11px] w-[12px]" viewBox="0 0 12 11" fill="none" stroke="#aaa"><path d="M1 4l4-2v6l-4 2zM6 3h4v5H6z"/></svg></button>
        <button aria-label="约束"><svg class="h-[11px] w-[12px]" viewBox="0 0 12 11" fill="none" stroke="#333"><path d="M1 2h9M1 0v10M10 0v4M5 10V7h5v3z"/><path d="M6 6l2-3 2 3"/></svg></button>
        <button aria-label="向左"><svg class="size-[6px]" viewBox="0 0 6 6" fill="none" stroke="#333" stroke-width="1.300"><path d="M5 0 2 3l3 3"/></svg></button>
      </div>
      <div class="flex flex-1 items-center justify-center" aria-hidden="true"><div class="h-[9px] w-[11px] bg-[#c9c9c9]"></div></div>
      <svg class="mr-[18px] size-[6px]" viewBox="0 0 6 6" fill="none" stroke="#333" stroke-width="1.300"><path d="M1 0l3 3-3 3"/></svg>
    </div>
  </div>
</div>
</div>

<!-- annotation frames -->
<div class="absolute top-[25px] left-[841px] h-[75px] w-[51px] rounded-[2px] border-2 border-[#f5362c]"></div>
<div class="absolute top-[233px] left-[2px] h-[27px] w-[143px] rounded-[2px] border-2 border-[#f5362c]"></div>
<div class="absolute top-[341px] left-[5px] h-[17px] w-[145px] rounded-[2px] border-2 border-[#f5362c]"></div>
</body>
</html>
